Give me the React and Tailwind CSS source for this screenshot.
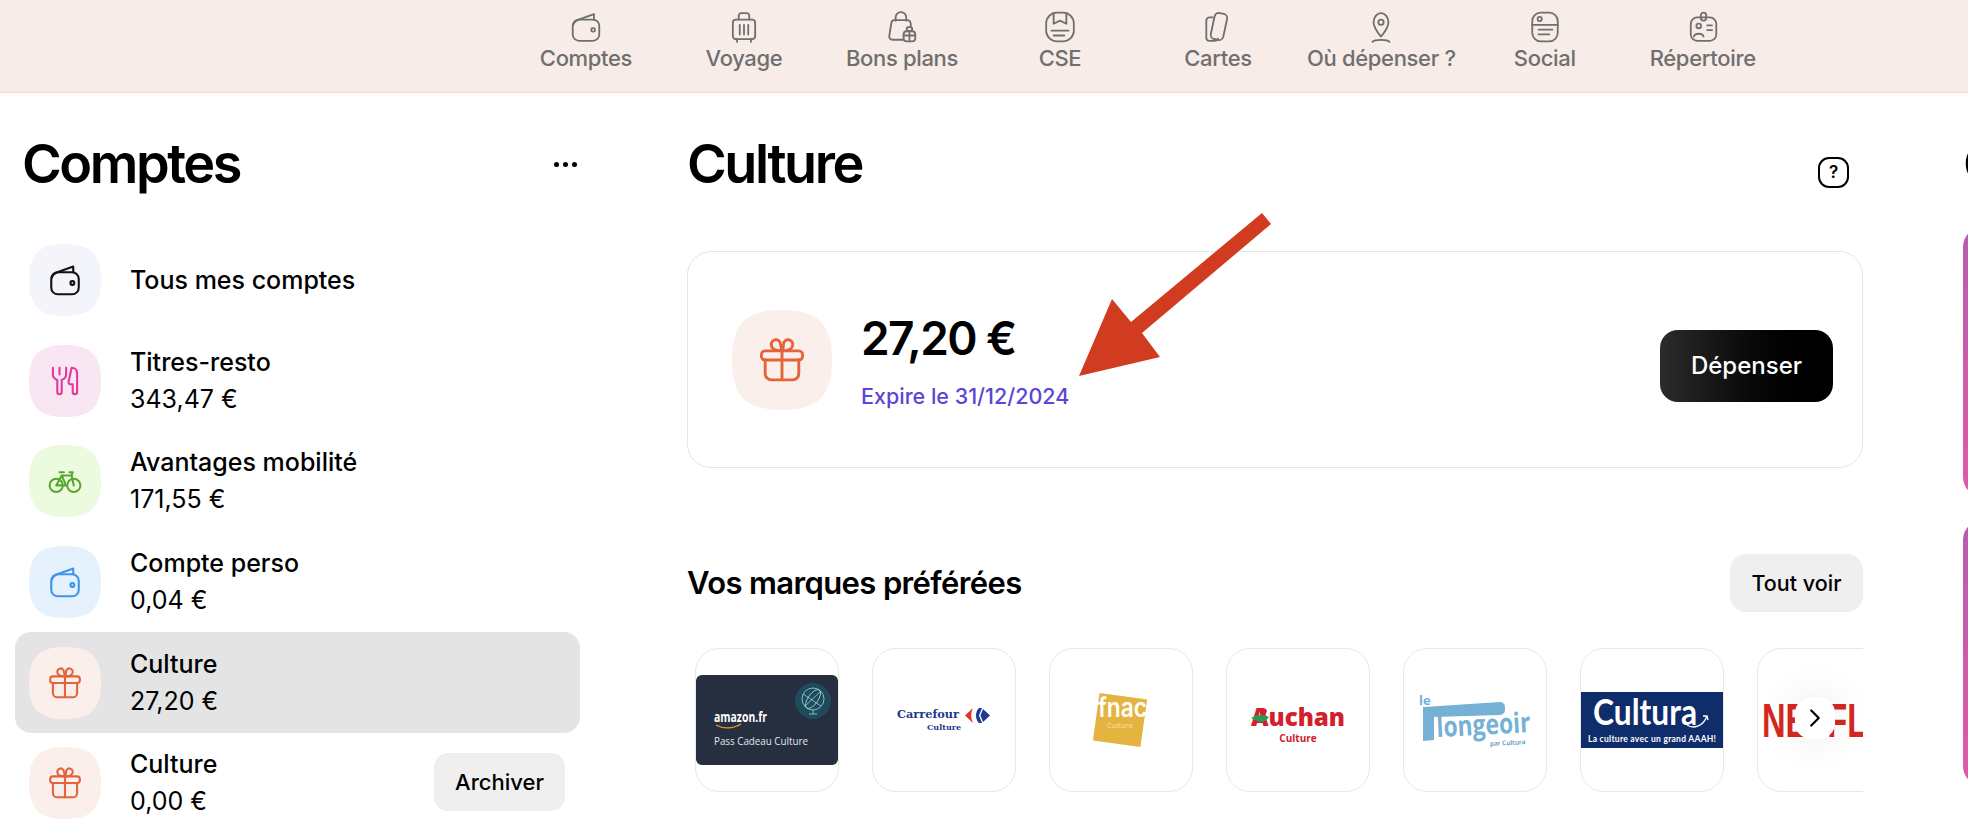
import React from 'react';
import { ChevronRight } from 'lucide-react';

const FONT = "Inter, 'Liberation Sans', sans-serif";

// icons are drawn in a 32x32 box
const WalletIcon = () => (
  <>
    <rect x="3.5" y="9" width="25" height="20" rx="6" />
    <path d="M4 14c.6-2.6 2.4-4 5-5l14.5-5.2V9" />
    <rect x="21" y="17" width="3.4" height="3.4" rx="1.4" />
  </>
);

const SuitcaseIcon = () => (
  <>
    <path d="M11 9V5.5A2.5 2.5 0 0 1 13.5 3h5A2.5 2.5 0 0 1 21 5.5V9" />
    <rect x="5.5" y="9" width="21" height="18.5" rx="3" />
    <path d="M12 14v9M16 14v9M20 14v9M9.5 27.5V30M22.5 27.5V30" />
  </>
);

const BagGiftIcon = () => (
  <>
    <path d="M10 10V7a5 5 0 0 1 10 0v3" />
    <path d="M17 28H7a3 3 0 0 1-3-3.4L6 12a3 3 0 0 1 3-2.5h12a3 3 0 0 1 3 2.5l.4 3" />
    <rect x="17.5" y="20" width="11" height="9.5" rx="3" />
    <path d="M23 20v9.5M17.5 24h11M23 20c-3.5 0-3.5-4 0-4s3.5 4 0 4Z" />
  </>
);

const BookIcon = () => (
  <>
    <rect x="3" y="2.5" width="26" height="27" rx="10" />
    <path d="M10 3v10l6-3 6 3V3M8 19.5h16M10 24h10" />
  </>
);

const CardsIcon = () => (
  <>
    <path d="M11 7H8a3 3 0 0 0-3 3v16a3 3 0 0 0 3 3h5a3 3 0 0 0 3-2" />
    <rect x="11" y="3" width="12" height="25" rx="4" transform="rotate(12 17 15)" />
  </>
);

const PinIcon = () => (
  <>
    <path d="M16 25c-3-3.600-7-8.500-7-13.500a7 8.500 0 0 1 14 0c0 5-4 9.900-7 13.500Z" />
    <circle cx="16" cy="11.500" r="2.500" />
    <path d="M8 30c2-2.500 14-2.500 16 0" />
  </>
);

const SocialIcon = () => (
  <>
    <rect x="4" y="2.500" width="24" height="27" rx="8" />
    <circle cx="11" cy="8.500" r="2" />
    <path d="M4 14h24M10 18.500h13M10 23h10" />
  </>
);

const BadgeIcon = () => (
  <>
    <rect x="4.500" y="7" width="24" height="22" rx="6" />
    <rect x="14" y="2.500" width="5" height="7.500" rx="2.500" />
    <circle cx="12" cy="15" r="2.200" />
    <path d="M7.500 25c.6-3.500 8.400-3.500 9 0M20 14.500h4.500M20 19h4.500" />
  </>
);

const ForkIcon = () => (
  <>
    <path d="M5 4v6c0 3 1.500 4 4 5v11a2 2 0 0 0 4 0V15c2.500-1 4-2 4-5V4M11 4v6" />
    <path d="M22 4c3 0 5 2 5 5v17a2 2 0 0 1-4 0v-7h-2c-1.500 0-2-1-1.700-2.500L22 4Z" />
  </>
);

const BikeIcon = () => (
  <>
    <circle cx="8" cy="20" r="6" />
    <circle cx="24" cy="20" r="6" />
    <path d="M8 20l5-9h9l2 9M13 11l4 9H8M11 8h4M20 8h3l-1 3" />
  </>
);

const GiftIcon = () => (
  <>
    <rect x="2.500" y="10" width="27" height="6" rx="2.500" />
    <path d="M5 16v9a4 4 0 0 0 4 4h14a4 4 0 0 0 4-4v-9M16 10v19" />
    <path d="M16 10c-5 0-7-2-7-4a3 3 0 0 1 6-.5L16 10c1-2 1-4 1-4.500a3 3 0 0 1 6 .5c0 2-2 4-7 4Z" />
  </>
);

const NavGlyph = ({ children }) => (
  <svg width="34" height="34" viewBox="0 0 32 32" fill="none" stroke="#6f6f6f" strokeWidth="1.700" strokeLinecap="round" strokeLinejoin="round">
    {children}
  </svg>
);

// squircle tile with the icon in its middle
const Tile = ({ size = 72, fill, stroke, children }) => (
  <svg width={size} height={size} viewBox="0 0 72 72" className="shrink-0">
    <path d="M36 0C62 0 72 10 72 36S62 72 36 72 0 62 0 36 10 0 36 0Z" fill={fill} />
    <g transform="translate(18.400 18.400) scale(1.100)" fill="none" stroke={stroke} strokeWidth="1.900" strokeLinecap="round" strokeLinejoin="round">
      {children}
    </g>
  </svg>
);

const NAV = [
  { label: 'Comptes', icon: <WalletIcon /> },
  { label: 'Voyage', icon: <SuitcaseIcon /> },
  { label: 'Bons plans', icon: <BagGiftIcon /> },
  { label: 'CSE', icon: <BookIcon /> },
  { label: 'Cartes', icon: <CardsIcon /> },
  { label: 'Où dépenser ?', icon: <PinIcon /> },
  { label: 'Social', icon: <SocialIcon /> },
  { label: 'Répertoire', icon: <BadgeIcon /> },
];

const ACCOUNTS = [
  { name: 'Tous mes comptes', fill: '#f4f5fa', stroke: '#111111', icon: <WalletIcon /> },
  { name: 'Titres-resto', amount: '343,47 €', fill: '#f9e6f3', stroke: '#e23a9c', icon: <ForkIcon /> },
  { name: 'Avantages mobilité', amount: '171,55 €', fill: '#ecfbdf', stroke: '#5aa52d', icon: <BikeIcon /> },
  { name: 'Compte perso', amount: '0,04 €', fill: '#e5f2fe', stroke: '#3f94e8', icon: <WalletIcon /> },
  { name: 'Culture', amount: '27,20 €', fill: '#fbefeb', stroke: '#e4633a', icon: <GiftIcon />, active: true },
  { name: 'Culture', amount: '0,00 €', fill: '#fbefeb', stroke: '#e4633a', icon: <GiftIcon />, archive: true },
];

const AmazonLogo = () => (
  <>
    <rect x="0" y="26" width="142" height="90" rx="6" fill="#252f3f" />
    <circle cx="117" cy="52" r="18" fill="#1f4a5c" />
    <g fill="none" stroke="#9fd6dc" strokeWidth="0.800">
      <circle cx="117" cy="50" r="11" />
      <ellipse cx="117" cy="50" rx="5" ry="11" transform="rotate(35 117 50)" />
      <path d="M107 45l18 12M109 57l16-15M117 61v4M113 65h8" />
    </g>
    <text x="18" y="73" fontSize="14.500" fontWeight="700" fill="#ffffff" fontFamily="'Open Sans', sans-serif" textLength="53" lengthAdjust="spacingAndGlyphs">amazon.fr</text>
    <path d="M20 76c7 4 17 4 25-1" fill="none" stroke="#f09a2a" strokeWidth="1.200" />
    <text x="18" y="96" fontSize="11.500" fill="#e4e6ea" fontFamily="'Open Sans', sans-serif" textLength="94" lengthAdjust="spacingAndGlyphs">Pass Cadeau Culture</text>
  </>
);

const CarrefourLogo = () => (
  <>
    <text x="24" y="69" fontSize="11.500" fontWeight="700" fill="#20388f" fontFamily="'DejaVu Serif', serif" textLength="62" lengthAdjust="spacingAndGlyphs">Carrefour</text>
    <text x="71" y="81" fontSize="8" fontWeight="700" fill="#20388f" fontFamily="'DejaVu Serif', serif" textAnchor="middle">Culture</text>
    <path d="M100 59l-8 7.500 8 7.500c-2.500-5-2.500-10 0-15Z" fill="#e2332a" />
    <path d="M106 59c-4 3.500-4 11.500 0 15h3l-3-7.500 3-7.500h-3Z" fill="#20388f" />
    <path d="M110 60l7 6.500-7 6.500-2.500-6.500L110 60Z" fill="#20388f" />
  </>
);

const FnacLogo = () => (
  <>
    <rect x="46" y="47" width="48" height="48" fill="#e3b43f" transform="rotate(8 70 71)" />
    <text x="48" y="68" fontSize="26" fontWeight="600" fill="#ffffff" fontFamily="Inter, sans-serif" textLength="49" lengthAdjust="spacingAndGlyphs">fnac</text>
    <text x="70" y="79" fontSize="7.500" fill="#f5e3ab" fontFamily="'Open Sans', sans-serif" textAnchor="middle">Culture</text>
  </>
);

const AuchanLogo = () => (
  <>
    <text x="24" y="77" fontSize="25" fontWeight="800" fill="#d3202c" fontFamily="'Open Sans', sans-serif" textLength="94" lengthAdjust="spacingAndGlyphs">Auchan</text>
    <path d="M24 69c4-3 9-4 14-3l4 2c-3 4-8 7-12 4l-6-3Z" fill="#2a9a55" />
    <path d="M33 60c3-2 6-1 7 2l-2 5-5-2v-5Z" fill="#d3202c" />
    <text x="71" y="93" fontSize="10" fontWeight="700" fill="#d3202c" fontFamily="'Open Sans', sans-serif" textAnchor="middle">Culture</text>
  </>
);

const LongeoirLogo = () => (
  <g fill="#74b1d5">
    <text x="15" y="56" fontSize="13" fontWeight="700" fontFamily="'Open Sans', sans-serif">le</text>
    <path d="M20 58l76-5a5 5 0 0 1 5 5v3a5 5 0 0 1-5 5l-66 2v23l-11 1V58Z" />
    <text x="33" y="88" fontSize="28" fontWeight="700" fontFamily="'Open Sans', sans-serif" textLength="94" lengthAdjust="spacingAndGlyphs" transform="rotate(-3 33 88)">longeoir</text>
    <text x="86" y="97" fontSize="6.500" fontWeight="600" fill="#4f93bd" fontFamily="'Open Sans', sans-serif" transform="rotate(-3 86 97)">par Cultura</text>
  </g>
);

const CulturaLogo = () => (
  <>
    <rect x="0" y="43" width="142" height="56" fill="#0f2c6b" />
    <text x="12" y="76" fontSize="36" fontWeight="700" fill="#ffffff" fontFamily="Lato, sans-serif" textLength="104" lengthAdjust="spacingAndGlyphs">Cultura</text>
    <path d="M106 76c6 4 16 2 20-9M122 67l4 0 1 4" fill="none" stroke="#ffffff" strokeWidth="1.300" />
    <text x="7" y="93" fontSize="8.500" fontWeight="700" fill="#ffffff" fontFamily="Lato, sans-serif" textLength="128">La culture avec un grand AAAH!</text>
  </>
);

const NetflixLogo = () => (
  <text x="4" y="88" fontSize="48" fontWeight="700" fill="#d5281f" fontFamily="'Liberation Sans', sans-serif" textLength="136" lengthAdjust="spacingAndGlyphs">NETFLIX</text>
);

const BRANDS = [
  { id: 'amazon', logo: <AmazonLogo /> },
  { id: 'carrefour', logo: <CarrefourLogo /> },
  { id: 'fnac', logo: <FnacLogo /> },
  { id: 'auchan', logo: <AuchanLogo /> },
  { id: 'longeoir', logo: <LongeoirLogo /> },
  { id: 'cultura', logo: <CulturaLogo /> },
  { id: 'netflix', logo: <NetflixLogo /> },
];

const App = () => {
  return (
    <div className="relative w-[1968px] h-[826px] overflow-hidden bg-white text-black" style={{ fontFamily: FONT }}>
      {/* Top nav */}
      <div className="h-[93px] bg-[#f7ece8] border-b border-[#f0d9ce] flex gap-4 pl-[515px] pt-[10px]">
        {NAV.map((item) => (
          <div key={item.label} className="min-w-[142px] px-[2px] flex flex-col items-center">
            <NavGlyph>{item.icon}</NavGlyph>
            <span className="text-[22px] leading-[26px] mt-[1px] font-medium text-[#6f6f6f] tracking-[-0.015em] whitespace-nowrap">{item.label}</span>
          </div>
        ))}
      </div>

      <div className="flex">
        {/* Accounts */}
        <div className="w-[565px] ml-[15px] shrink-0">
          <div className="h-[60px] mt-[41px] mb-[36px] flex items-center justify-between pl-[7px] pr-[3px]">
            <h1 className="text-[54px] leading-[60px] font-semibold tracking-[-0.045em]">Comptes</h1>
            <div className="flex gap-[4px] mt-[1px]">
              <span className="w-[5px] h-[5px] rounded-full bg-black" />
              <span className="w-[5px] h-[5px] rounded-full bg-black" />
              <span className="w-[5px] h-[5px] rounded-full bg-black" />
            </div>
          </div>
          {ACCOUNTS.map((acc, i) => (
            <div key={i} className={`h-[100.6px] flex items-center pl-[14px] pr-[15px] rounded-[16px] ${acc.active ? 'bg-[#e4e4e4]' : ''}`}>
              <Tile fill={acc.fill} stroke={acc.stroke}>{acc.icon}</Tile>
              <div className="ml-[29px] flex-1">
                <div className="text-[25px] leading-[37px] font-medium">{acc.name}</div>
                {acc.amount && <div className="text-[25px] leading-[37px]">{acc.amount}</div>}
              </div>
              {acc.archive && (
                <button className="w-[131px] h-[58px] -mt-[2px] rounded-[14px] bg-[#efefef] text-[22px] font-medium">Archiver</button>
              )}
            </div>
          ))}
        </div>

        {/* Culture */}
        <div className="w-[1176px] ml-[107px] shrink-0">
          <div className="h-[60px] mt-[41px] flex items-center justify-between pr-[14px]">
            <h1 className="text-[54px] leading-[60px] font-semibold tracking-[-0.045em]">Culture</h1>
            <div className="w-[31px] h-[31px] mt-[17px] rounded-[11px] border-2 border-black flex items-center justify-center text-[17px] font-semibold leading-none">?</div>
          </div>

          <div className="mt-[57px] h-[217px] border border-[#e6e6e6] rounded-[24px] flex items-center pl-[44px] pr-[29px]">
            <Tile size={100} fill="#fbefeb" stroke="#e4633a"><GiftIcon /></Tile>
            <div className="ml-[29px] flex-1">
              <div className="text-[46px] leading-[56px] font-semibold tracking-[-0.035em]">27,20 €</div>
              <div className="text-[21.5px] leading-[28px] mt-[16px] font-medium text-[#5b45d6]">Expire le 31/12/2024</div>
            </div>
            <button className="w-[173px] h-[72px] mt-[12px] rounded-[18px] bg-gradient-to-r from-[#2c2c2c] to-black text-white text-[24px] font-medium">Dépenser</button>
          </div>

          <div className="mt-[86px] h-[58px] flex items-center justify-between">
            <h2 className="text-[31px] font-semibold tracking-[-0.02em]">Vos marques préférées</h2>
            <button className="w-[133px] h-[58px] rounded-[16px] bg-[#efefef] text-[21.5px] font-medium">Tout voir</button>
          </div>

          <div className="relative mt-[36px] overflow-hidden flex gap-[33px] pl-[8px]">
            {BRANDS.map((brand) => (
              <div key={brand.id} className="w-[144px] h-[144px] shrink-0 border border-[#e8e8e8] rounded-[24px] overflow-hidden">
                <svg width="142" height="142" viewBox="0 0 142 142">{brand.logo}</svg>
              </div>
            ))}
            <div className="absolute right-[28px] top-[49px] w-10 h-[42px] rounded-[16px] bg-white flex items-center justify-center shadow-[0_0_40px_rgba(0,0,0,0.1)]">
              <ChevronRight size={30} strokeWidth={1.800} color="#000000" />
            </div>
          </div>
        </div>

        {/* Right column, cut off by the window */}
        <div className="ml-[100px] w-[400px] shrink-0">
          <div className="h-[60px] mt-[41px] text-[54px] leading-[60px] font-semibold">C</div>
          <div className="mt-[33px] h-[270px] rounded-[20px] bg-gradient-to-b from-[#b85cae] to-[#e05aa8]" />
          <div className="mt-[23px] h-[266px] rounded-[20px] bg-gradient-to-b from-[#b85cae] to-[#e05aa8]" />
        </div>
      </div>

      {/* Red annotation arrow */}
      <svg className="absolute left-0 top-0 pointer-events-none" width="1968" height="826" viewBox="0 0 1968 826">
        <polygon points="1262,213 1271,224 1142,333 1160,357 1079,376 1112,299 1131,322" fill="#d13b20" />
      </svg>
    </div>
  );
};

export default App;
